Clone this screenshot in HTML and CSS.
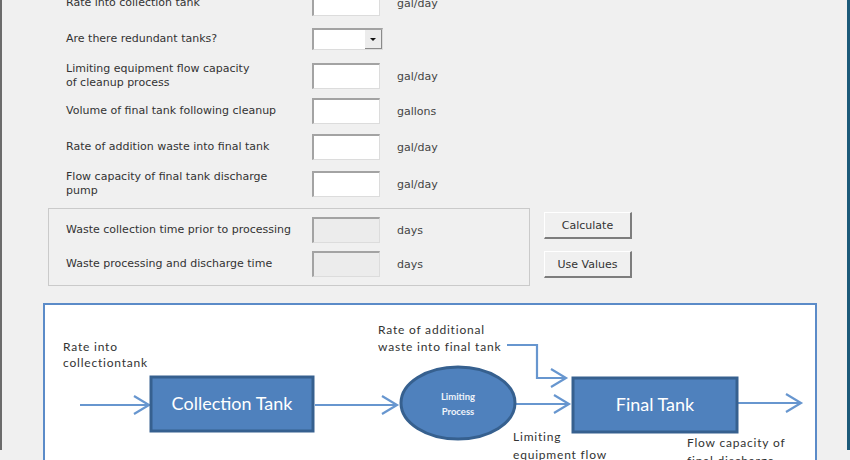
FILE: index.html
```html
<!DOCTYPE html>
<html lang="en">
<head>
    <meta charset="UTF-8">
    <meta name="viewport" content="width=device-width, initial-scale=1.0">
    <title>Tank Sizing</title>
    <link rel="stylesheet" href="styles.css">
</head>
<body>
    <div class="window">
        <form class="sizing">
            <div class="field">
                <label>Rate into collection tank</label>
                <input type="text">
                <span class="unit">gal/day</span>
            </div>
            <div class="field">
                <label>Are there redundant tanks?</label>
                <div class="combo"><span class="combo-btn"></span></div>
            </div>
            <div class="field">
                <label>Limiting equipment flow capacity<br>of cleanup process</label>
                <input type="text">
                <span class="unit">gal/day</span>
            </div>
            <div class="field">
                <label>Volume of final tank following cleanup</label>
                <input type="text">
                <span class="unit">gallons</span>
            </div>
            <div class="field">
                <label>Rate of addition waste into final tank</label>
                <input type="text">
                <span class="unit">gal/day</span>
            </div>
            <div class="field">
                <label>Flow capacity of final tank discharge<br>pump</label>
                <input type="text">
                <span class="unit">gal/day</span>
            </div>

            <div class="results">
                <div class="outputs">
                    <div class="field">
                        <label>Waste collection time prior to processing</label>
                        <input type="text" disabled>
                        <span class="unit">days</span>
                    </div>
                    <div class="field">
                        <label>Waste processing and discharge time</label>
                        <input type="text" disabled>
                        <span class="unit">days</span>
                    </div>
                </div>
                <div class="actions">
                    <button type="button">Calculate</button>
                    <button type="button">Use Values</button>
                </div>
            </div>
        </form>

        <div class="diagram">
            <svg width="770" height="200" viewBox="0 0 770 200">
                <!-- flow lines -->
                <g class="flow">
                    <line x1="35" y1="100" x2="104" y2="100"/>
                    <polyline points="89,91 104,100 89,109"/>
                    <line x1="270" y1="100" x2="352" y2="100"/>
                    <polyline points="337,91 352,100 337,109"/>
                    <line x1="471" y1="99" x2="524" y2="99"/>
                    <polyline points="509,90 524,99 509,108"/>
                    <polyline points="462,40 492,40 492,73 521,73"/>
                    <polyline points="506,64 521,73 506,82"/>
                    <line x1="693" y1="98" x2="756" y2="98"/>
                    <polyline points="741,89 756,98 741,107"/>
                </g>

                <!-- tanks and process -->
                <rect class="tank" x="106" y="72" width="162" height="54"/>
                <text class="tank-label" x="187" y="105" text-anchor="middle">Collection Tank</text>

                <ellipse class="tank" cx="413" cy="98" rx="57" ry="36"/>
                <text class="proc-label" x="413" y="95" text-anchor="middle">Limiting</text>
                <text class="proc-label" x="413" y="110" text-anchor="middle">Process</text>

                <rect class="tank" x="528" y="73" width="164" height="54"/>
                <text class="tank-label" x="610" y="106" text-anchor="middle">Final Tank</text>

                <!-- notes -->
                <text class="note" x="18" y="46">Rate into</text>
                <text class="note" x="18" y="62">collectiontank</text>
                <text class="note" x="333" y="29">Rate of additional</text>
                <text class="note" x="333" y="46">waste into final tank</text>
                <text class="note" x="468" y="136">Limiting</text>
                <text class="note" x="468" y="154">equipment flow</text>
                <text class="note" x="642" y="142">Flow capacity of</text>
                <text class="note" x="642" y="160">final discharge</text>
            </svg>
        </div>
    </div>
</body>
</html>
```

FILE: styles.css
```css
body {
    margin: 0;
    height: 460px;
    overflow: hidden;
    background-color: #f0f0f0;
    font-family: "DejaVu Sans", Verdana, sans-serif;
    font-size: 11px;
    color: #333;
}
.window {
    box-sizing: border-box;
    height: 460px;
    padding-left: 41px;
    border-left: 2px solid #6b6b6b;
    border-right: 3px solid #1c5a79;
}
.sizing {
    display: flex;
    flex-direction: column;
    gap: 10px;
    margin-top: -10px;
}
.field {
    display: grid;
    grid-template-columns: 246px 85px auto;
    align-items: center;
    height: 26px;
    margin-left: 23px;
}
.field label {
    line-height: 14px;
    white-space: nowrap;
}
.field input {
    box-sizing: border-box;
    width: 68px;
    height: 26px;
    margin: 0;
    background: #fff;
    border: 1px solid #dcdcdc;
    border-top: 2px solid #a3a3a3;
    border-left: 2px solid #a3a3a3;
    outline: none;
}
.field input:disabled {
    background: #ececec;
}
.unit {
    color: #444;
}
.combo {
    box-sizing: border-box;
    position: relative;
    width: 71px;
    height: 22px;
    background: #fff;
    border: 1px solid #dcdcdc;
    border-top: 2px solid #a3a3a3;
    border-left: 2px solid #a3a3a3;
}
.combo-btn {
    position: absolute;
    top: 0;
    right: 0;
    bottom: 0;
    width: 16px;
    background: #ececec;
    border-right: 1px solid #8a8a8a;
    border-bottom: 1px solid #8a8a8a;
}
.combo-btn::after {
    content: "";
    position: absolute;
    left: 5px;
    top: 8px;
    border-left: 3px solid transparent;
    border-right: 3px solid transparent;
    border-top: 3px solid #111;
}
.results {
    display: flex;
    margin-top: 2px;
}
.outputs {
    box-sizing: border-box;
    display: flex;
    flex-direction: column;
    gap: 8px;
    width: 482px;
    margin-left: 5px;
    padding: 8px 0 8px 0;
    border: 1px solid #cacaca;
}
.outputs .field {
    margin-left: 17px;
}
.actions {
    display: flex;
    flex-direction: column;
    gap: 12px;
    margin-left: 14px;
    padding-top: 4px;
}
.actions button {
    box-sizing: border-box;
    width: 88px;
    height: 27px;
    padding: 0;
    background: #f0f0f0;
    border: 1px solid #fff;
    border-right: 2px solid #7d7d7d;
    border-bottom: 2px solid #7d7d7d;
    font-family: "DejaVu Sans", Verdana, sans-serif;
    font-size: 11px;
    color: #333;
}
.diagram {
    width: 770px;
    height: 200px;
    margin-top: 17px;
    background: #fff;
    border: 2px solid #5b8bc8;
}
.diagram svg {
    display: block;
}
.flow line,
.flow polyline {
    fill: none;
    stroke: #6796cf;
    stroke-width: 2.2;
}
.tank {
    fill: #4f81bd;
    stroke: #36608f;
    stroke-width: 3;
}
.tank-label {
    font-family: Lato, "Open Sans", sans-serif;
    font-size: 18px;
    fill: #fff;
}
.proc-label {
    font-family: Lato, "Open Sans", sans-serif;
    font-size: 9.5px;
    font-weight: 700;
    fill: #eef3fa;
}
.note {
    font-family: Lato, "Open Sans", sans-serif;
    font-size: 12px;
    letter-spacing: 0.8px;
    fill: #333;
}
```
